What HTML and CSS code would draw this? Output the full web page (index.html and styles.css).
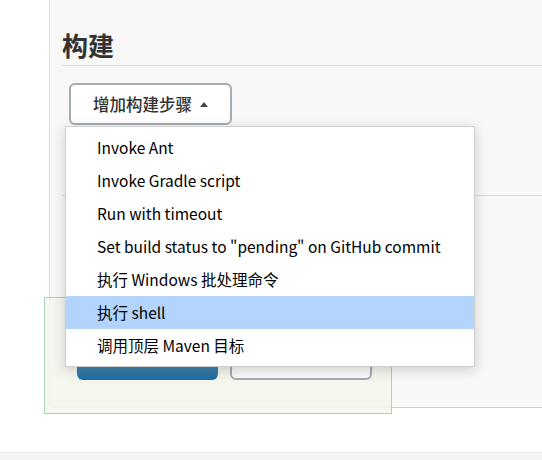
FILE: index.html
```html
<!DOCTYPE html>
<html lang="zh-CN">
<head>
<meta charset="utf-8">
<title>构建</title>
<link rel="stylesheet" href="styles.css">
</head>
<body>
<div class="main">
  <div class="gutter"></div>
  <div class="panel">
    <h2 class="title">构建</h2>
    <button class="add-step">增加构建步骤 <span class="caret"></span></button>
    <div class="section-line"></div>
  </div>
</div>
<div class="footer"></div>

<div class="sticky">
  <div class="sticky-buttons">
    <button class="btn-primary" aria-label="保存"></button>
    <button class="btn-secondary" aria-label="应用"></button>
  </div>
</div>

<ul class="menu">
  <li class="item">Invoke Ant</li>
  <li class="item">Invoke Gradle script</li>
  <li class="item">Run with timeout</li>
  <li class="item">Set build status to "pending" on GitHub commit</li>
  <li class="item">执行 Windows 批处理命令</li>
  <li class="item active">执行 shell</li>
  <li class="item">调用顶层 Maven 目标</li>
</ul>
</body>
</html>
```

FILE: styles.css
```css
html, body {
  margin: 0;
  padding: 0;
  background: #ffffff;
  height: 460px;
  overflow: hidden;
  font-family: "Noto Sans CJK SC", "Noto Sans", sans-serif;
}

.main {
  display: flex;
  height: 408px;
}

.gutter {
  width: 49px;
  flex: none;
}

.panel {
  flex: 1;
  background: #f8f8f8;
  border-left: 1px solid #dcdcdc;
  border-bottom: 1px solid #cfcfcf;
  border-bottom-left-radius: 6px;
  padding: 27px 0 0 12px;
  box-sizing: border-box;
}

.title {
  margin: 0;
  font-size: 26px;
  font-weight: 700;
  line-height: 36px;
  padding-bottom: 2px;
  color: #333;
  border-bottom: 1px solid #dedede;
}

.add-step {
  display: flex;
  align-items: center;
  margin: 17px 0 0 7px;
  height: 42px;
  padding: 0 22px;
  background: #fff;
  border: 2px solid #a3abb3;
  border-radius: 6px;
  font-family: "Noto Sans CJK SC", sans-serif;
  font-size: 16.5px;
  font-weight: 500;
  color: #333;
}

.caret {
  display: inline-block;
  width: 0;
  height: 0;
  margin-left: 8px;
  border-left: 4.5px solid transparent;
  border-right: 4.5px solid transparent;
  border-bottom: 5px solid #444;
}

.section-line {
  margin-top: 70px;
  border-top: 1px solid #dedede;
}

.footer {
  margin-top: 44px;
  height: 8px;
  background: #f4f4f4;
  border-top: 1px solid #e8e8e8;
}

.sticky {
  position: absolute;
  left: 44px;
  top: 297px;
  width: 348px;
  height: 117px;
  box-sizing: border-box;
  border: 1px solid #a9d3bb;
  background: rgba(244, 246, 236, 0.85);
}

.sticky-buttons {
  display: flex;
  gap: 12px;
  padding: 47px 0 0 32px;
}

.btn-primary, .btn-secondary {
  height: 35px;
  border-radius: 6px;
  box-sizing: border-box;
}

.btn-primary {
  width: 141px;
  border: none;
  background: linear-gradient(#8aaac2, #1c6ca3);
}

.btn-secondary {
  width: 142px;
  border: 2px solid #a3abb3;
  background: #fafaf8;
}

.menu {
  position: absolute;
  left: 65px;
  top: 126px;
  width: 410px;
  margin: 0;
  padding: 4px 0;
  list-style: none;
  background: #fff;
  border: 1px solid #cfcfcf;
  box-sizing: border-box;
  box-shadow: 0 3px 12px rgba(0, 0, 0, 0.18);
}

.item {
  height: 33px;
  line-height: 33px;
  padding-left: 31px;
  font-size: 15.5px;
  color: #000;
  white-space: nowrap;
}

.item.active {
  background: #b3d4fc;
}
```
